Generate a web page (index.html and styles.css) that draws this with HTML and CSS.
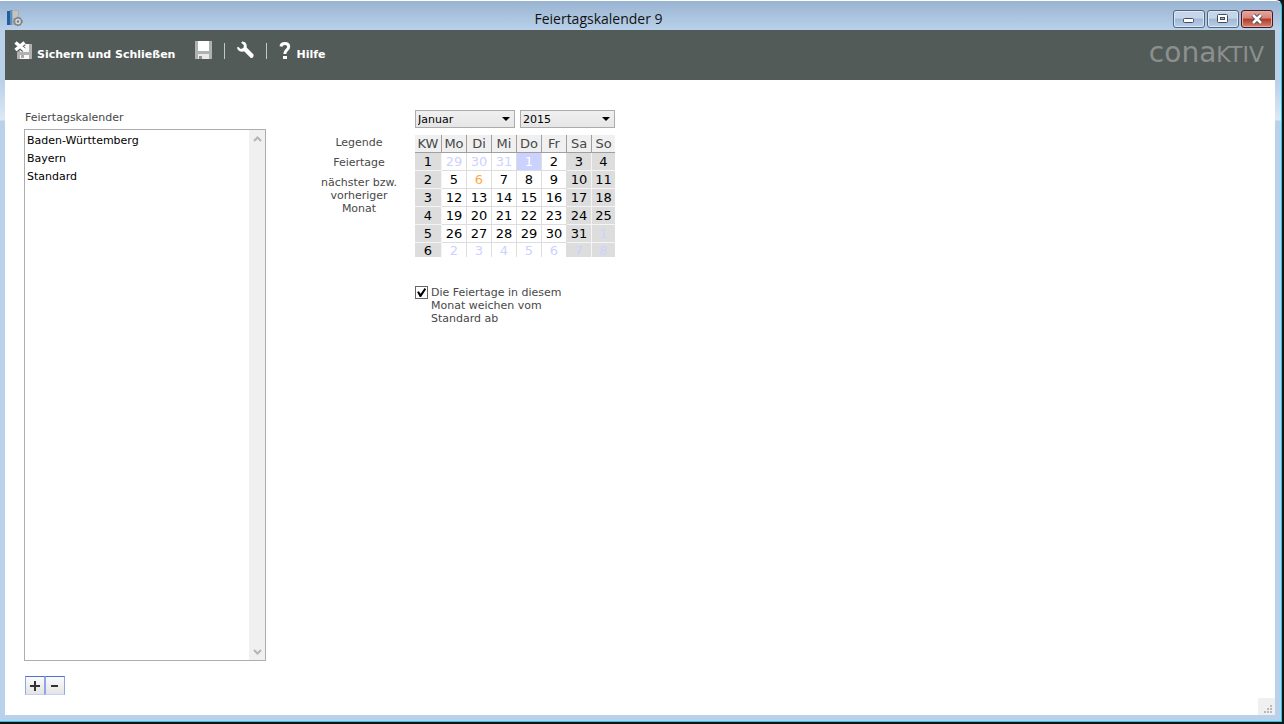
FILE: index.html
```
<!DOCTYPE html>
<html lang="de">
<head>
    <meta charset="UTF-8">
    <meta name="viewport" content="width=device-width, initial-scale=1.0">
    <title>Feiertagskalender 9</title>
    <link rel="stylesheet" href="styles.css">
</head>
<body>
    <div class="window">
        <header class="titlebar">
            <svg class="app-icon" width="17" height="17" viewBox="0 0 17 17">
                <rect x="0" y="1" width="4" height="14" fill="#1f5f9f"/>
                <rect x="3" y="0" width="9" height="15" fill="#aaadb0"/>
                <rect x="3" y="0" width="2" height="15" fill="#5d8fbd"/>
                <rect x="6" y="1" width="5" height="7" fill="#c2c4c6"/>
                <circle cx="11" cy="11.500" r="3.500" fill="#d8dadc" stroke="#85898c" stroke-width="1.500"/>
                <circle cx="11" cy="11.500" r="4.200" fill="none" stroke="#6f7377" stroke-dasharray="1.500 1.500"/>
                <circle cx="11" cy="11.500" r="1.200" fill="#777b7e"/>
            </svg>
            <h1>Feiertagskalender 9</h1>
            <div class="window-buttons">
                <button type="button" aria-label="Minimieren">
                    <svg width="30" height="16" viewBox="0 0 30 16"><rect x="9.500" y="7.500" width="10" height="4" rx="1" fill="#fff" stroke="#444b5d"/></svg>
                </button>
                <button type="button" aria-label="Maximieren">
                    <svg width="30" height="16" viewBox="0 0 30 16"><rect x="9.500" y="3.500" width="10" height="8" rx="1" fill="#fff" stroke="#444b5d"/><rect x="12.500" y="6.500" width="4" height="2" fill="#9fb7d4" stroke="#444b5d"/></svg>
                </button>
                <button type="button" class="close" aria-label="Schließen">
                    <svg width="30" height="16" viewBox="0 0 30 16"><path d="M11 4l8 8M19 4l-8 8" stroke="#4b4450" stroke-width="4.500"/><path d="M11 4l8 8M19 4l-8 8" stroke="#fff" stroke-width="2.600"/></svg>
                </button>
            </div>
        </header>

        <nav class="toolbar">
            <button type="button" class="tool save-close">
                <svg width="19" height="20" viewBox="0 0 19 20">
                    <path d="M3 3h15v15H3z" fill="#b0b2b1"/>
                    <path d="M6 3h9v8H6zM6 14h9v4H6z" fill="#f7f7f7"/>
                    <path d="M7 14h3v3H7z" fill="#aaa"/>
                    <path d="M2 2l8 7M10 2l-8 7" stroke="#535b59" stroke-width="5"/>
                    <path d="M1.500 1.500l9 7.500M10.500 1.500l-9 7.500" stroke="#fff" stroke-width="3.500"/>
                </svg>
                <span>Sichern und Schließen</span>
            </button>
            <button type="button" class="tool save" aria-label="Sichern">
                <svg width="17" height="20" viewBox="0 0 17 20">
                    <path d="M0 0h17v18H0z" fill="#b0b2b1"/>
                    <path d="M3 0h11v10H3z" fill="#fff"/>
                    <path d="M3 13h11v5H3z" fill="#e9e9e9"/>
                    <path d="M4 15h3v3H4z" fill="#909291"/>
                </svg>
            </button>
            <span class="divider"></span>
            <button type="button" class="tool" aria-label="Werkzeuge">
                <svg width="17" height="20" viewBox="0 0 18 20" fill="#fff">
                    <path d="M5.500 0C9 .2 10.800 2.600 10.200 6.300L17.500 13.700Q18 15 17 16.500Q16 17.700 14.600 17.400L7.500 10.300C4.500 11.500.8 9.800 0 6.500L1.200 5.500L4 7.800L6.800 6.800L7.300 3.800L4.500 1.200z"/>
                </svg>
            </button>
            <span class="divider"></span>
            <button type="button" class="tool help">
                <svg width="12" height="18" viewBox="0 0 12 18">
                    <path d="M2 4.500C2.500 .6 9.700 .6 9.700 4.800C9.700 8.200 5.800 7.700 5.800 12" fill="none" stroke="#fff" stroke-width="3"/>
                    <rect x="4" y="14" width="4" height="3" fill="#fff"/>
                </svg>
                <span>Hilfe</span>
            </button>
            <span class="logo">cona<span>KTIV</span></span>
        </nav>

        <main>
            <section class="calendars">
                <label for="kalender">Feiertagskalender</label>
                <div class="listbox">
                    <select id="kalender" size="20">
                        <option>Baden-Württemberg</option>
                        <option>Bayern</option>
                        <option>Standard</option>
                    </select>
                    <div class="scrollbar">
                        <button type="button" aria-label="Nach oben"><svg width="9" height="6" viewBox="0 0 9 6"><path d="M1 5l3.500-3.500L8 5"/></svg></button>
                        <button type="button" aria-label="Nach unten"><svg width="9" height="6" viewBox="0 0 9 6"><path d="M1 1l3.500 3.500L8 1"/></svg></button>
                    </div>
                </div>
                <div class="list-actions">
                    <button type="button" aria-label="Hinzufügen"><svg width="10" height="10" viewBox="0 0 10 10"><path d="M0 5h10M5 0v10"/></svg></button>
                    <button type="button" aria-label="Entfernen"><svg width="10" height="10" viewBox="0 0 10 10"><path d="M1 5h7"/></svg></button>
                </div>
            </section>

            <section class="legend">
                <p>Legende</p>
                <p>Feiertage</p>
                <p>nächster bzw. vorheriger Monat</p>
            </section>

            <section class="month">
                <div class="pickers">
                    <div class="picker month-picker">
                        <select aria-label="Monat"><option>Januar</option></select>
                        <svg width="8" height="4" viewBox="0 0 8 4"><path d="M0 0h8L4 4z"/></svg>
                    </div>
                    <div class="picker year-picker">
                        <select aria-label="Jahr"><option>2015</option></select>
                        <svg width="8" height="4" viewBox="0 0 8 4"><path d="M0 0h8L4 4z"/></svg>
                    </div>
                </div>
                <table>
                    <thead>
                        <tr><th class="kw">KW</th><th>Mo</th><th>Di</th><th>Mi</th><th>Do</th><th>Fr</th><th>Sa</th><th class="so">So</th></tr>
                    </thead>
                    <tbody>
                        <tr><td>1</td><td class="other">29</td><td class="other">30</td><td class="other">31</td><td class="selected">1</td><td>2</td><td>3</td><td>4</td></tr>
                        <tr><td>2</td><td>5</td><td class="holiday">6</td><td>7</td><td>8</td><td>9</td><td>10</td><td>11</td></tr>
                        <tr><td>3</td><td>12</td><td>13</td><td>14</td><td>15</td><td>16</td><td>17</td><td>18</td></tr>
                        <tr><td>4</td><td>19</td><td>20</td><td>21</td><td>22</td><td>23</td><td>24</td><td>25</td></tr>
                        <tr><td>5</td><td>26</td><td>27</td><td>28</td><td>29</td><td>30</td><td>31</td><td class="other">1</td></tr>
                        <tr class="last-week"><td>6</td><td class="other">2</td><td class="other">3</td><td class="other">4</td><td class="other">5</td><td class="other">6</td><td class="other">7</td><td class="other">8</td></tr>
                    </tbody>
                </table>
                <div class="deviation">
                    <input type="checkbox" id="abweichung" checked>
                    <label for="abweichung">Die Feiertage in diesem Monat weichen vom Standard ab</label>
                </div>
            </section>

            <div class="grip">
                <svg width="8" height="8" viewBox="0 0 8 8" fill="#b9b9b9"><path d="M6 0h2v2H6zM3 3h2v2H3zM6 3h2v2H6zM0 6h2v2H0zM3 6h2v2H3zM6 6h2v2H6z"/></svg>
            </div>
        </main>
    </div>
</body>
</html>
```
FILE: styles.css
```
* {
    box-sizing: border-box;
}
body {
    margin: 0;
    padding: 0 2px 2px 0;
    min-height: 100vh;
    display: flex;
    background-color: #101414;
    color: #484848;
    font-family: "DejaVu Sans", Verdana, sans-serif;
    font-size: 11px;
    line-height: 13px;
}
button, select, input {
    margin: 0;
    padding: 0;
    font: inherit;
    color: inherit;
}
svg {
    display: block;
    flex: none;
}

/* Fensterrahmen */
.window {
    flex: 1;
    display: flex;
    flex-direction: column;
    padding: 0 6px 6px 5px;
    border-top: 1px solid #fff;
    border-right: 1px solid #2cc4de;
    border-bottom: 1px solid #2cc4de;
    border-radius: 0 6px 0 0;
    background: linear-gradient(#99b4d1, #b9d1ea 29px, #b9d1ea 80px, #dce8f5 119px, #b9d1ea 120px);
}
.titlebar {
    height: 29px;
    display: flex;
    align-items: center;
    padding: 6px 2px 0;
}
.titlebar h1 {
    flex: 1;
    margin: 0;
    color: #111;
    font: 14px/20px "Open Sans", "Segoe UI", sans-serif;
    text-align: center;
}
.window-buttons {
    display: flex;
    gap: 2px;
}
.window-buttons button {
    width: 32px;
    height: 18px;
    border: 1px solid #54647f;
    border-radius: 3px;
    background: linear-gradient(#c5d6ea 45%, #9fb8d6 50%, #b8cfe9);
    box-shadow: inset 0 0 0 1px #dbe7f4;
}
.window-buttons .close {
    border-color: #451722;
    background: linear-gradient(#e5a79f, #d5857a 45%, #b43722 50%, #d08576);
    box-shadow: inset 0 0 0 1px #e5aaa2;
}

/* Werkzeugleiste */
.toolbar {
    height: 50px;
    display: flex;
    align-items: flex-start;
    padding: 11px 11px 0 9px;
    background-color: #535b59;
    color: #fff;
}
.tool {
    height: 20px;
    display: flex;
    align-items: center;
    gap: 4px;
    border: none;
    background: none;
    font-weight: bold;
}
.tool span {
    padding-top: 7px;
}
.save {
    margin-left: 20px;
}
.divider {
    width: 1px;
    height: 16px;
    margin: 2px 12px;
    background-color: #c4c7c6;
}
.help {
    gap: 5px;
}
.logo {
    margin-left: auto;
    color: #8b908f;
    font-size: 28px;
    line-height: 24px;
}
.logo span {
    font-size: 22px;
}

/* Inhalt */
main {
    flex: 1;
    position: relative;
    display: flex;
    align-items: flex-start;
    padding: 30px 19px 20px;
    background-color: #fff;
}
.calendars {
    align-self: stretch;
    width: 242px;
    display: flex;
    flex-direction: column;
}
.calendars label {
    height: 19px;
    padding: 1px;
}
.listbox {
    flex: 1;
    display: flex;
    border: 1px solid #abadb3;
}
.listbox select {
    flex: 1;
    border: none;
    outline: none;
    overflow: hidden;
    background-color: #fff;
}
.listbox option {
    min-height: 18px;
    padding: 4px 2px 1px;
    color: #000;
    line-height: 13px;
}
.scrollbar {
    width: 16px;
    display: flex;
    flex-direction: column;
    justify-content: space-between;
    background-color: #f0f0f0;
}
.scrollbar button {
    height: 17px;
    display: grid;
    place-items: center;
    border: none;
    background: none;
}
.scrollbar path {
    fill: none;
    stroke: #b5b5b5;
    stroke-width: 2;
}
.list-actions {
    display: flex;
    margin: 15px 0 0 1px;
}
.list-actions button {
    width: 20px;
    height: 19px;
    display: grid;
    place-items: center;
    border: 1px solid;
    border-color: #5070d8 #8fa5e8 #c3cff8;
    background: linear-gradient(#fbfbfb, #e4e4e4);
}
.list-actions path {
    stroke: #333;
    stroke-width: 2;
}
.legend {
    width: 90px;
    margin: 26px 11px 0 48px;
    text-align: center;
}
.legend p {
    margin: 0 0 7px;
}
.month {
    width: 200px;
}
.pickers {
    display: flex;
    gap: 5px;
}
.picker {
    display: grid;
    align-items: center;
}
.month-picker {
    width: 100px;
}
.year-picker {
    width: 95px;
}
.picker select, .picker svg {
    grid-area: 1 / 1;
}
.picker select {
    height: 18px;
    padding-left: 2px;
    appearance: none;
    border: 1px solid #acacac;
    border-radius: 0;
    background: linear-gradient(#f0f0f0, #e6e6e6);
    color: #000;
}
.picker svg {
    justify-self: end;
    margin-right: 5px;
    pointer-events: none;
}

/* Monatsblatt */
table {
    width: 100%;
    margin-top: 7px;
    table-layout: fixed;
    border-collapse: separate;
    border-spacing: 0;
    font-size: 13px;
    line-height: 17px;
}
th, td {
    height: 18px;
    padding: 0;
    text-align: center;
    border: solid #ddd;
    border-width: 0 1px 1px 0;
}
th {
    width: 25px;
    background-color: #f0f0f0;
    border-color: #a0a0a0;
    font-weight: normal;
}
.kw {
    width: 27px;
}
.so {
    width: 23px;
}
td {
    color: #000;
}
td:first-child, td:nth-child(n+7) {
    background-color: #ddd;
    border-color: #f4f4f4;
}
tr > :last-child {
    border-right: none;
}
.last-week td {
    height: 14px;
    padding-top: 2px;
    border-bottom: none;
    line-height: 12px;
}
td.other {
    color: #ccd2ff;
}
td.selected {
    background-color: #ccd2ff;
    color: #fff;
}
td.holiday {
    color: #ffa84c;
}
.deviation {
    display: flex;
    align-items: flex-start;
    gap: 3px;
    margin-top: 29px;
    padding-right: 45px;
}
.deviation input {
    flex: none;
    width: 13px;
    height: 13px;
    appearance: none;
    border: 1px solid #666;
    background-color: #fff;
}
.deviation input:checked::before {
    content: "";
    display: block;
    width: 11px;
    height: 11px;
    background-color: #000;
    clip-path: polygon(10% 45%, 25% 38%, 42% 62%, 78% 10%, 92% 20%, 46% 92%, 34% 92%);
}
.grip {
    position: absolute;
    right: 0;
    bottom: 0;
    width: 17px;
    height: 17px;
    padding: 7px 0 0 6px;
    background-color: #f0f0f0;
}
```
